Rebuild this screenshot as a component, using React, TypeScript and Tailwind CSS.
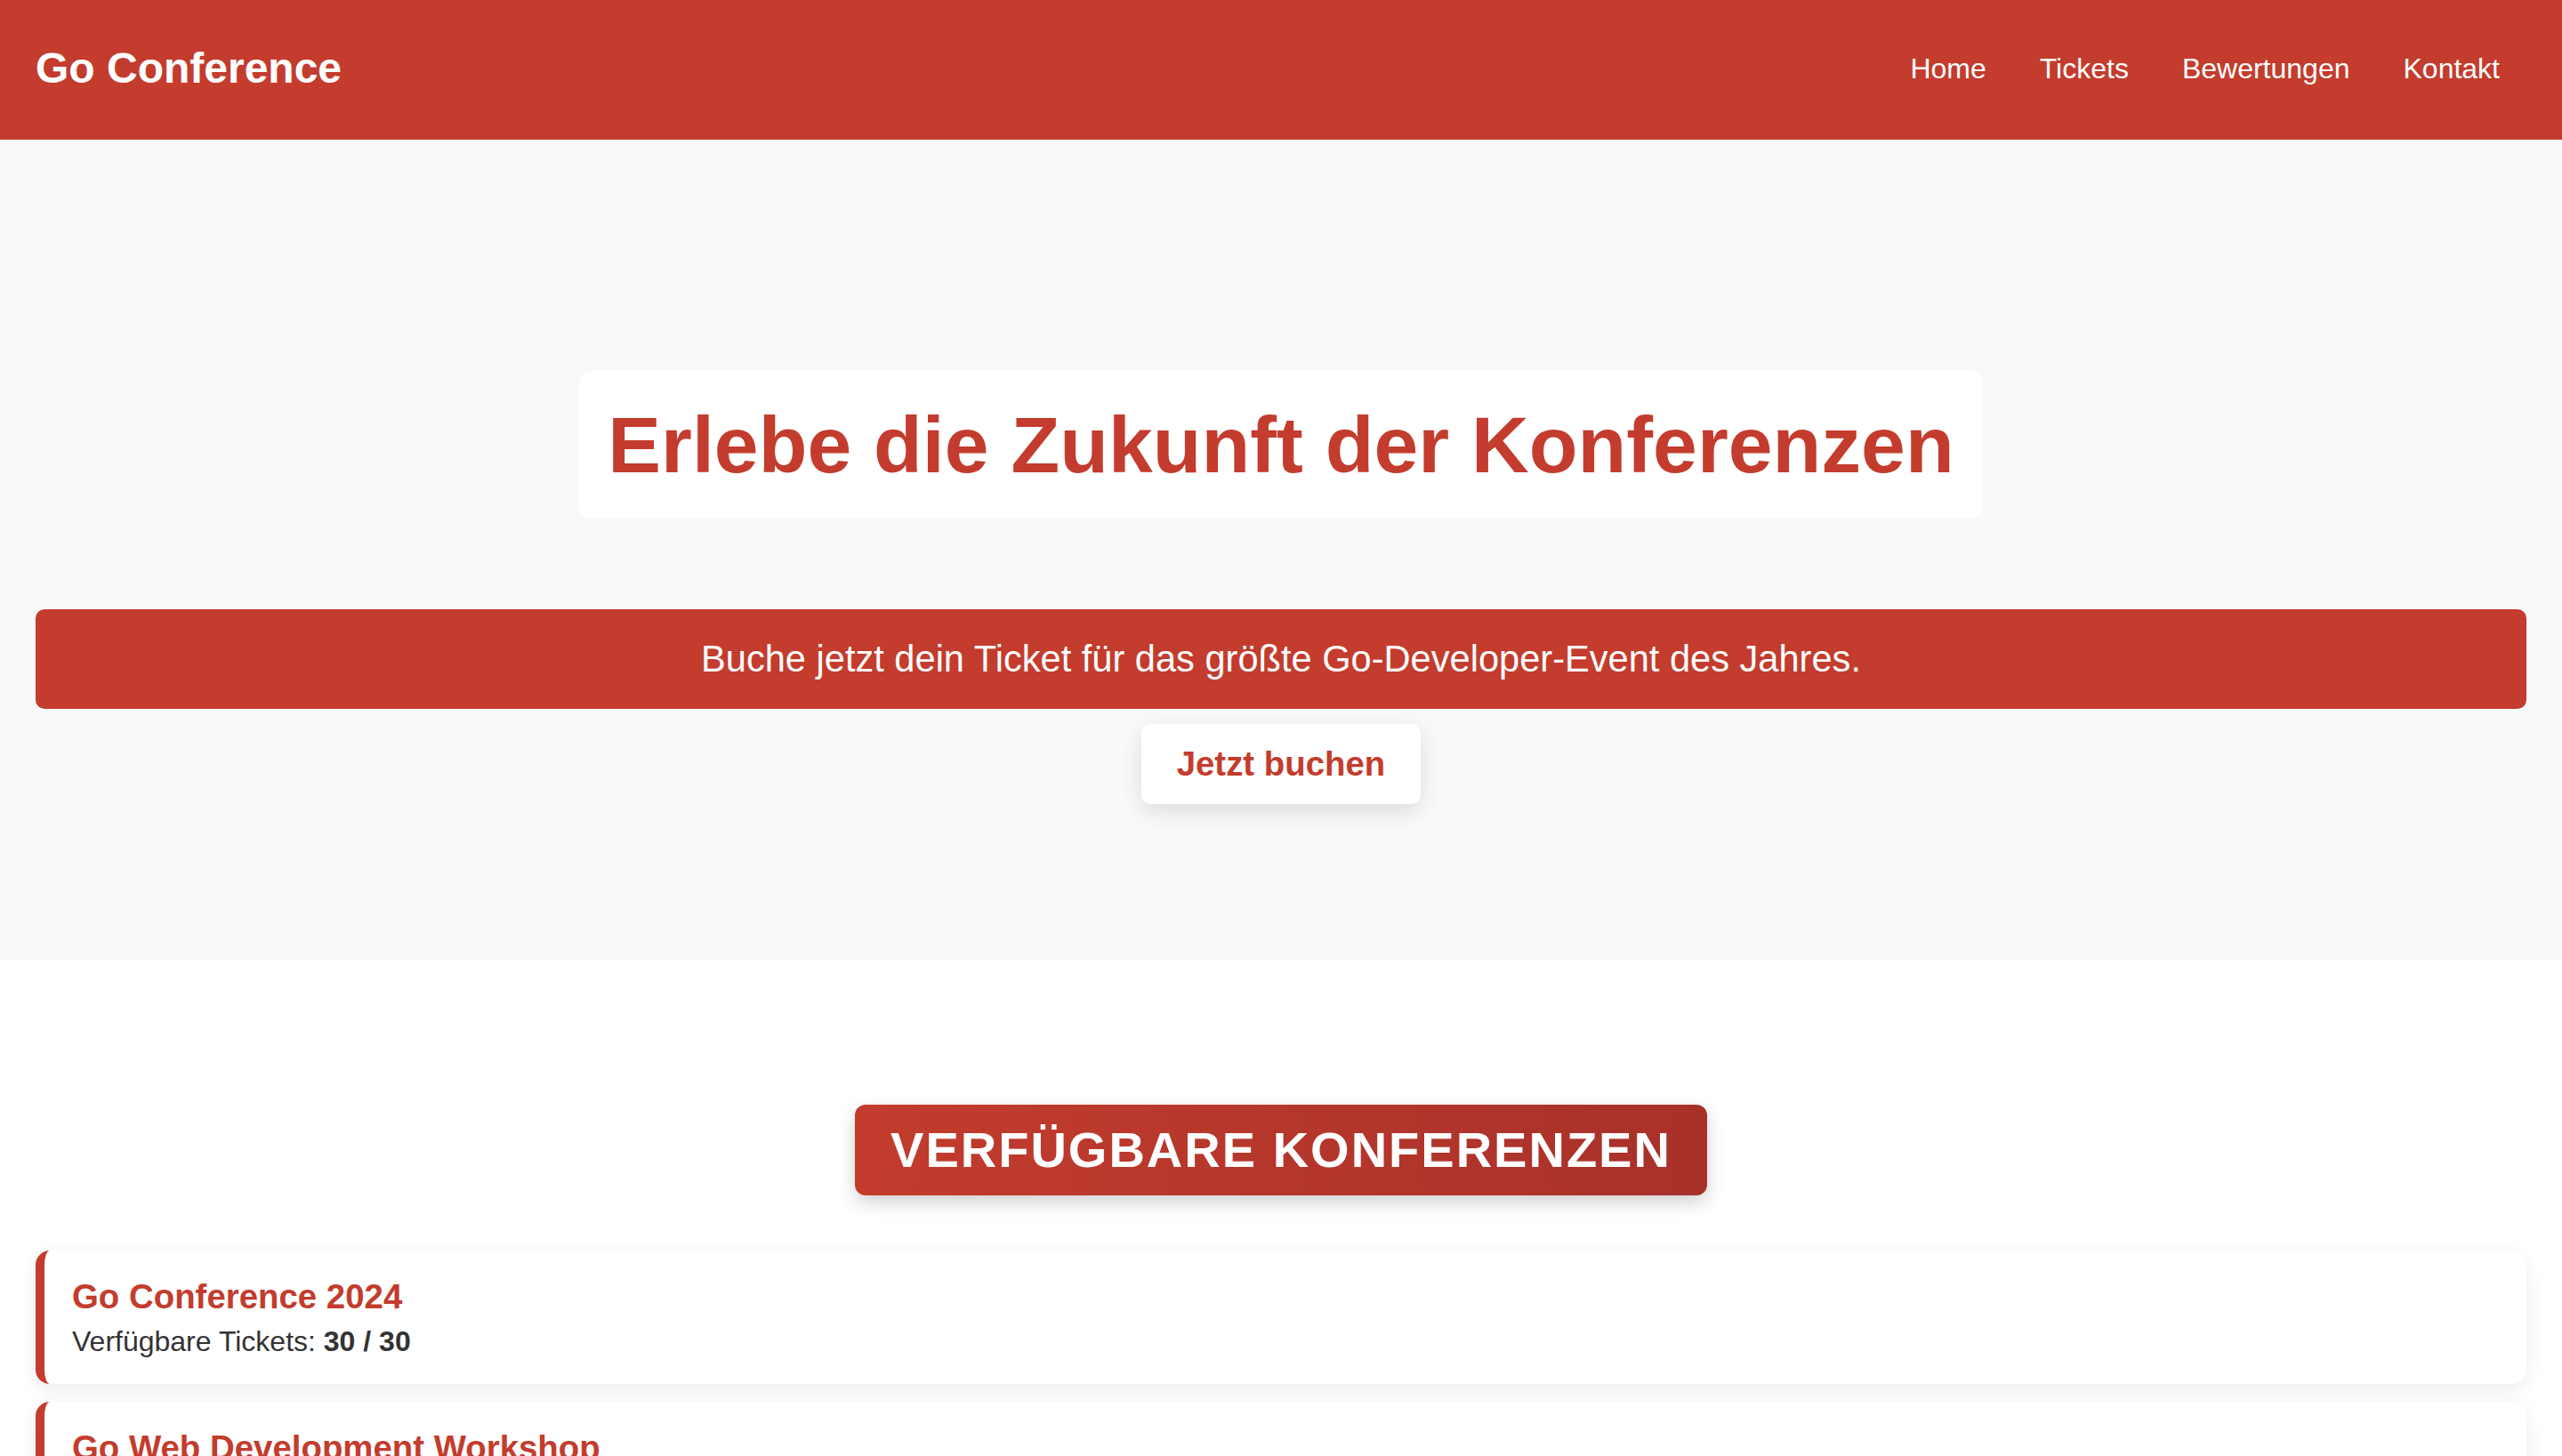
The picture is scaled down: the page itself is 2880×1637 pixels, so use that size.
import React from 'react';

const conferences = [
  { name: 'Go Conference 2024', remaining: 30, total: 30 },
  { name: 'Go Web Development Workshop', remaining: 25, total: 25 },
  { name: 'GopherCon Europe', remaining: 50, total: 50 },
];

const navLinks = ['Home', 'Tickets', 'Bewertungen', 'Kontakt'];

export default function App() {
  return (
    <div className="min-h-screen bg-white font-['Liberation_Sans',Arial,sans-serif] text-[#333]">
      <header className="h-[157px] bg-[#c33c2d] flex items-center justify-between pl-[40px] pr-[70px] pb-[4px]">
        <h1 className="text-[48px] font-bold text-white leading-none">Go Conference</h1>
        <nav className="flex items-center gap-[60px]">
          {navLinks.map((link) => (
            <a key={link} href="#" className="text-[32px] text-white leading-none">
              {link}
            </a>
          ))}
        </nav>
      </header>

      <section className="bg-[#f8f9fa] pt-[260px] pb-[176px] px-[40px] flex flex-col items-center">
        <div className="bg-white rounded-[14px] px-[32px] py-[32px]">
          <h2 className="text-[89.6px] font-bold text-[#c33c2d] leading-[102px]">
            Erlebe die Zukunft der Konferenzen
          </h2>
        </div>
        <p className="mt-[102px] w-full bg-[#c33c2d] rounded-[10px] py-[32px] text-center text-[41.6px] text-white leading-[1.15]">
          Buche jetzt dein Ticket für das größte Go-Developer-Event des Jahres.
        </p>
        <button className="mt-[17px] bg-white rounded-[10px] px-[40px] py-[23px] text-[38.4px] font-bold text-[#c33c2d] leading-[1.15] shadow-[0_8px_24px_rgba(0,0,0,0.12)]">
          Jetzt buchen
        </button>
      </section>

      <section className="pt-[162px] px-[40px] pb-[80px] flex flex-col items-center">
        <h2 className="rounded-[12px] bg-gradient-to-r from-[#c33c2d] to-[#a8312a] px-[40px] py-[19px] text-[56px] font-bold uppercase tracking-[2px] text-white leading-[1.15] shadow-[0_8px_20px_rgba(0,0,0,0.18)]">
          Verfügbare Konferenzen
        </h2>
        <div className="mt-[62px] w-full flex flex-col gap-[20px]">
          {conferences.map((c) => (
            <div
              key={c.name}
              className="bg-white rounded-[16px] border-l-[10px] border-[#c33c2d] pl-[31px] pr-[32px] py-[30px] shadow-[0_6px_20px_rgba(0,0,0,0.08)]"
            >
              <h3 className="text-[38.4px] font-bold text-[#c33c2d] leading-[1.15]">{c.name}</h3>
              <p className="mt-[9px] text-[32px] text-[#333] leading-[1.15]">
                Verfügbare Tickets: <strong className="font-bold">{c.remaining} / {c.total}</strong>
              </p>
            </div>
          ))}
        </div>
      </section>
    </div>
  );
}
